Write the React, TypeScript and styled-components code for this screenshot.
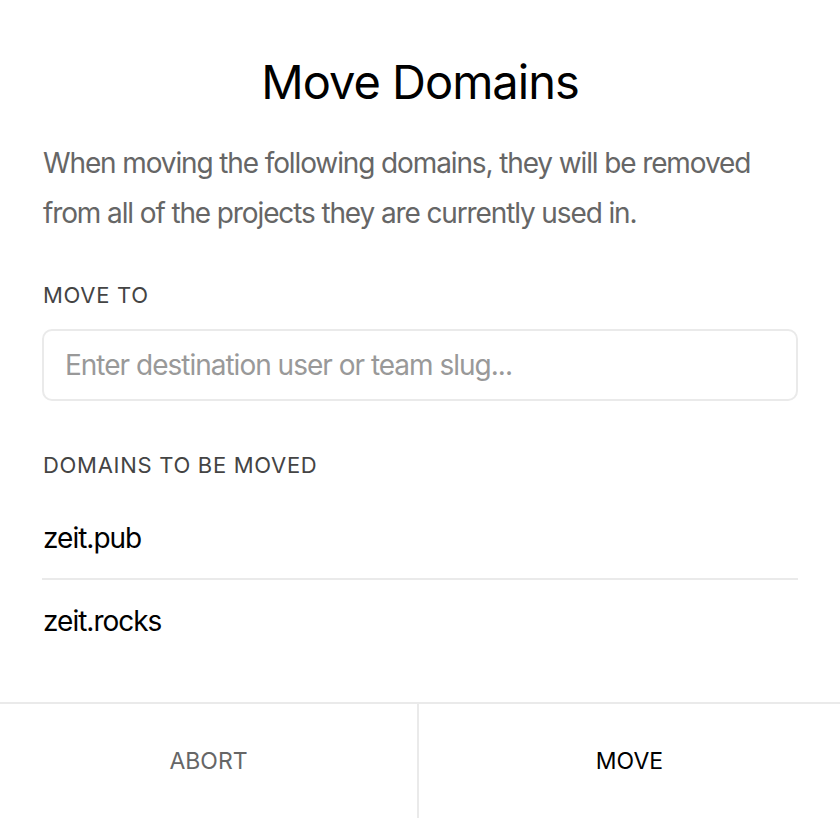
import React from "react";
import styled, { createGlobalStyle } from "styled-components";

const Global = createGlobalStyle`
  html, body { margin: 0; padding: 0; background: #fff; }
  body { font-family: Inter, "Noto Sans", Arial, sans-serif; -webkit-font-smoothing: antialiased; }
  * { box-sizing: border-box; }
`;

const Modal = styled.div`
  width: 840px;
  height: 818px;
  display: flex;
  flex-direction: column;
  background: #fff;
`;

const Body = styled.div`
  flex: 1;
  padding: 0 42px;
  display: flex;
  flex-direction: column;
`;

const Title = styled.h1`
  margin: 54px 0 0;
  font-size: 47px;
  font-weight: 400;
  line-height: 56px;
  text-align: center;
  color: #000;
  letter-spacing: -1px;
`;

const Description = styled.p`
  margin: 28px 0 0 1px;
  font-size: 28px;
  line-height: 50px;
  color: #666;
  letter-spacing: -1.12px;
`;

const Label = styled.div<{ $gap: number }>`
  margin: ${p => p.$gap}px 0 0 1px;
  font-size: 22px;
  line-height: 30px;
  color: #444;
  letter-spacing: 0.7px;
  text-transform: uppercase;
`;

const Input = styled.input`
  margin-top: 19px;
  width: 756px;
  height: 72px;
  border: 2px solid #eaeaea;
  border-radius: 10px;
  padding: 0 21px;
  font-family: inherit;
  font-size: 28px;
  letter-spacing: -1px;
  color: #000;
  outline: none;
  &::placeholder { color: #999; }
`;

const DomainList = styled.ul`
  list-style: none;
  margin: 18px 0 0;
  padding: 0;
`;

const DomainItem = styled.li`
  height: 82px;
  display: flex;
  align-items: center;
  padding-left: 1px;
  font-size: 28px;
  letter-spacing: -1px;
  color: #000;
  border-bottom: 2px solid #eaeaea;
  &:last-child { border-bottom: none; }
`;

const Footer = styled.div`
  height: 116px;
  display: grid;
  grid-template-columns: 419px 1fr;
  border-top: 2px solid #eaeaea;
`;

const Action = styled.button<{ $primary?: boolean }>`
  border: none;
  background: #fff;
  font-family: inherit;
  font-size: 23px;
  text-transform: uppercase;
  color: ${p => (p.$primary ? "#000" : "#666")};
  border-right: ${p => (p.$primary ? "none" : "2px solid #eaeaea")};
  cursor: pointer;
`;

export default function App() {
  return (
    <>
      <Global />
      <Modal>
        <Body>
          <Title>Move Domains</Title>
          <Description>
            When moving the following domains, they will be removed from all of the projects they are currently used in.
          </Description>
          <Label $gap={42}>Move to</Label>
          <Input placeholder="Enter destination user or team slug..." />
          <Label $gap={49}>Domains to be moved</Label>
          <DomainList>
            <DomainItem>zeit.pub</DomainItem>
            <DomainItem>zeit.rocks</DomainItem>
          </DomainList>
        </Body>
        <Footer>
          <Action>Abort</Action>
          <Action $primary>Move</Action>
        </Footer>
      </Modal>
    </>
  );
}
